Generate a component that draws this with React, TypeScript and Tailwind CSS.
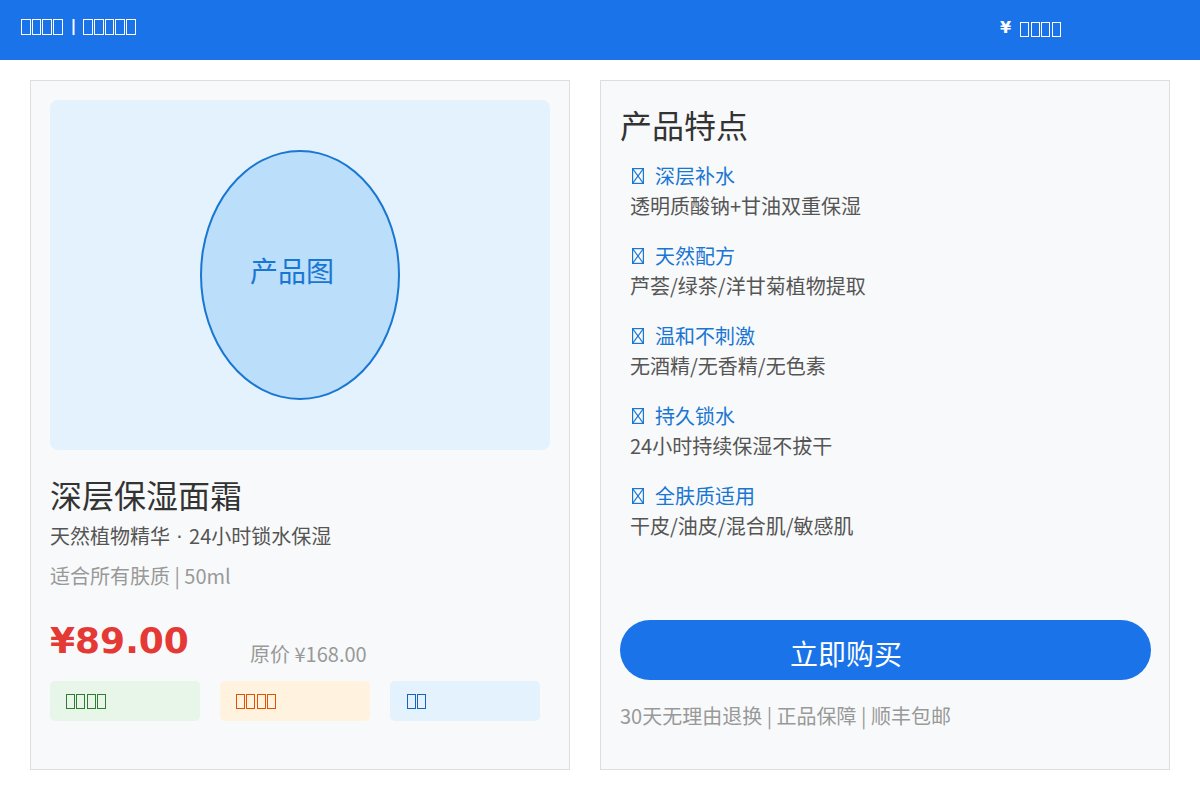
import React from "react";

const cjk = { fontFamily: '"Noto Sans CJK SC", "Noto Sans", sans-serif' };
const dejavu = { fontFamily: '"DejaVu Sans", "Noto Sans CJK SC", sans-serif' };

function Tofu({ n, cls, gap }: { n: number; cls: string; gap: string }) {
  return (
    <span className={`flex shrink-0 ${gap}`}>
      {Array.from({ length: n }).map((_, i) => (
        <span key={i} className={cls} />
      ))}
    </span>
  );
}

function XBox() {
  return (
    <svg width="12" height="16" viewBox="0 0 12 16" className="shrink-0 block">
      <rect x="0.6" y="0.6" width="10.8" height="14.8" fill="none" stroke="#1976d2" strokeWidth="1.2" />
      <line x1="0.6" y1="0.6" x2="11.4" y2="15.4" stroke="#1976d2" strokeWidth="1.1" />
      <line x1="11.4" y1="0.6" x2="0.6" y2="15.4" stroke="#1976d2" strokeWidth="1.1" />
    </svg>
  );
}

const features = [
  ["深层补水", "透明质酸钠+甘油双重保湿"],
  ["天然配方", "芦荟/绿茶/洋甘菊植物提取"],
  ["温和不刺激", "无酒精/无香精/无色素"],
  ["持久锁水", "24小时持续保湿不拔干"],
  ["全肤质适用", "干皮/油皮/混合肌/敏感肌"],
];

export default function App() {
  const headTofu = "block shrink-0 w-[9.5px] h-[16px] border-[1.6px] border-white";
  return (
    <div className="w-[1200px] h-[800px] bg-white overflow-hidden" style={cjk}>
      <div className="h-[60px] bg-[#1a73e8] flex px-[20px]">
        <div className="flex-1 flex items-start pt-[19px] pl-[1px]">
          <Tofu n={4} cls={headTofu} gap="gap-[1.2px]" />
          <span
            className="ml-[8px] mt-[-1.5px] text-white font-bold text-[16px] leading-[16px]"
            style={dejavu}
          >
            |
          </span>
          <span className="ml-[7px]">
            <Tofu n={5} cls={headTofu} gap="gap-[1.2px]" />
          </span>
        </div>
        <div className="w-[180px] flex items-start">
          <span
            className="mt-[20px] text-white font-bold text-[16px] leading-[16px]"
            style={dejavu}
          >
            ¥
          </span>
          <span className="ml-[9px] mt-[22px]">
            <Tofu n={4} cls="block shrink-0 w-[9px] h-[15px] border-[1.5px] border-white" gap="gap-[1.5px]" />
          </span>
        </div>
      </div>

      <div className="flex gap-[30px] pt-[20px] pl-[30px]">
        {/* Left card */}
        <div className="w-[540px] h-[690px] border border-[#dedede] bg-[#f8f9fa] p-[19px] flex flex-col">
          <div className="w-[500px] h-[350px] rounded-[8px] bg-[#e3f2fd] flex items-center justify-center">
            <div className="w-[200px] h-[250px] rounded-[50%] bg-[#bbdefb] border-2 border-[#1976d2] flex items-center justify-center pr-[16px] pb-[10px]">
              <span className="text-[28px] leading-[28px] text-[#1976d2]">产品图</span>
            </div>
          </div>
          <div className="mt-[28px] text-[32px] leading-[32px] text-[#333]">深层保湿面霜</div>
          <div className="mt-[16px] text-[20px] leading-[20px] text-[#555]">
            天然植物精华<span style={dejavu}> · </span>24小时锁水保湿
          </div>
          <div className="mt-[19px] text-[20px] leading-[20px] text-[#999]">适合所有肤质 | 50ml</div>
          <div className="mt-[35px] h-[60px] flex items-start">
            <span
              className="w-[200px] font-bold text-[36px] leading-[40px] text-[#e53935]"
              style={dejavu}
            >
              ¥89.00
            </span>
            <span className="mt-[23px] text-[20px] leading-[20px] text-[#999]">原价 ¥168.00</span>
          </div>
          <div className="flex gap-[20px]">
            <div className="w-[150px] h-[40px] rounded-[5px] bg-[#e8f5e9] flex items-center pl-[16px]">
              <Tofu n={4} cls="block shrink-0 w-[9px] h-[15px] border-[1.5px] border-[#2e7d32]" gap="gap-[1.25px]" />
            </div>
            <div className="w-[150px] h-[40px] rounded-[5px] bg-[#fff3e0] flex items-center pl-[16px]">
              <Tofu n={4} cls="block shrink-0 w-[9px] h-[15px] border-[1.5px] border-[#e65100]" gap="gap-[1.25px]" />
            </div>
            <div className="w-[150px] h-[40px] rounded-[5px] bg-[#e3f2fd] flex items-center pl-[17px]">
              <Tofu n={2} cls="block shrink-0 w-[9px] h-[15px] border-[1.5px] border-[#1565c0]" gap="gap-[1.25px]" />
            </div>
          </div>
        </div>

        {/* Right card */}
        <div className="w-[570px] h-[690px] border border-[#dedede] bg-[#f8f9fa] p-[19px] flex flex-col">
          <div className="mt-[8px] text-[32px] leading-[32px] text-[#333]">产品特点</div>
          <div className="mt-[26px] flex flex-col gap-[30px]">
            {features.map(([t, d]) => (
              <div key={t} className="flex flex-col">
                <div className="h-[20px] flex items-center pl-[12px]">
                  <XBox />
                  <span className="ml-[11px] text-[20px] leading-[20px] text-[#1976d2]">{t}</span>
                </div>
                <div className="mt-[10px] pl-[10px] text-[20px] leading-[20px] text-[#555]">{d}</div>
              </div>
            ))}
          </div>
          <div className="mt-[84px] w-[531px] h-[60px] rounded-full bg-[#1a73e8] flex items-center pl-[170px] pt-[6px]">
            <span className="text-[28px] leading-[28px] text-white">立即购买</span>
          </div>
          <div className="mt-[26px] text-[20px] leading-[20px] text-[#999]">30天无理由退换 | 正品保障 | 顺丰包邮</div>
        </div>
      </div>
    </div>
  );
}
